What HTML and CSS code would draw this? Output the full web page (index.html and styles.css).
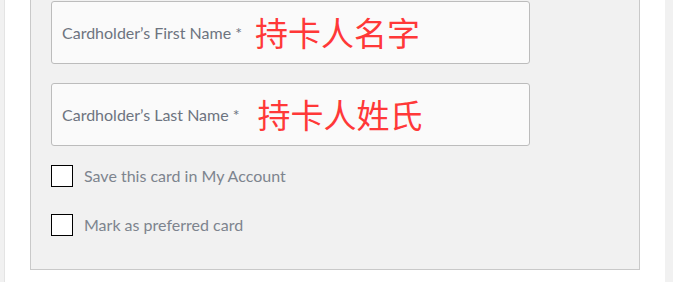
FILE: index.html
```html
<html>
  <head>
    <title>Card details</title>
    <link rel="stylesheet" href="styles.css">
  </head>
  <body>
  <div class="page">
    <div class="side side-left"></div>
    <div class="main">
      <div class="panel">
        <div class="field">
          <span class="fieldLabel">Cardholder’s First Name *</span>
          <span class="note">持卡人名字</span>
        </div>
        <div class="field">
          <span class="fieldLabel">Cardholder’s Last Name *</span>
          <span class="note note-last">持卡人姓氏</span>
        </div>
        <label class="check">
          <span class="box"></span>
          <span class="checkText">Save this card in My Account</span>
        </label>
        <label class="check">
          <span class="box"></span>
          <span class="checkText">Mark as preferred card</span>
        </label>
      </div>
    </div>
    <div class="side side-right"></div>
  </div>
  </body>
</html>
```

FILE: styles.css
```css
body{
    margin: 0;
    background-color: #ffffff;
    font-family: Lato, "Noto Sans", sans-serif;
}
.page{
    display: flex;
    height: 282px;
}
.side{
    background-color: #f1f1f1;
}
.side-left{
    width: 4px;
    border-right: 1px solid #e4e4e4;
}
.side-right{
    width: 8px;
}
.main{
    flex: 1;
    padding: 0 25px 11px 25px;
}
.panel{
    background-color: #f1f1f1;
    border: 1px solid #c9c9c9;
    border-top: none;
    height: 270px;
    box-sizing: border-box;
    padding: 1px 20px 0 20px;
}
.field{
    width: 479px;
    height: 63px;
    box-sizing: border-box;
    background-color: #fafafa;
    border: 1px solid #bcbcbc;
    border-radius: 3px;
    margin-bottom: 19px;
    padding-left: 10px;
    display: flex;
    align-items: center;
}
.fieldLabel{
    color: #6d7480;
    font-size: 16px;
}
.note{
    color: #ff3838;
    font-family: "Noto Sans CJK SC", sans-serif;
    font-size: 33px;
    margin-left: 13px;
    line-height: 1;
}
.note-last{
    margin-left: 18px;
}
.check{
    display: flex;
    align-items: center;
    height: 22px;
    margin-bottom: 27px;
}
.box{
    width: 22px;
    height: 22px;
    box-sizing: border-box;
    border: 1px solid #000000;
    background-color: #ffffff;
}
.checkText{
    color: #7d848e;
    font-size: 16px;
    margin-left: 11px;
    margin-top: -1px;
}
```
